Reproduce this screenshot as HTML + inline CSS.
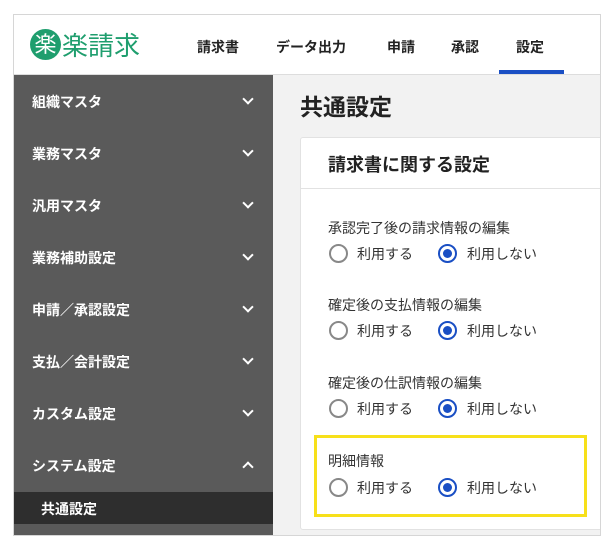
<!DOCTYPE html>
<html><head><meta charset="utf-8"><style>
*{margin:0;padding:0;box-sizing:border-box}
body{width:613px;height:548px;background:#fff;font-family:"Liberation Sans","Noto Sans CJK JP",sans-serif;position:relative;overflow:hidden;color:#222}
.a{position:absolute;white-space:nowrap}
#frame{position:absolute;left:13px;top:14px;width:588px;height:522px;border:1px solid #d6d6d6;background:#f2f2f2;overflow:hidden}
#hdr{position:absolute;left:0;top:0;width:588px;height:60px;background:#fff;border-bottom:1px solid #ddd}
.nav{position:absolute;top:22px;font-size:14px;font-weight:bold;color:#222}
#side{position:absolute;left:0;top:60px;width:259px;height:462px;background:#5a5a5a}
.si{position:absolute;left:18px;font-size:14px;font-weight:bold;color:#fff}
.chev{position:absolute;left:230px;width:8px;height:8px;border-right:2px solid #fff;border-bottom:2px solid #fff;transform:rotate(45deg)}
#card{position:absolute;left:286px;top:122px;width:310px;height:393px;background:#fff;border:1px solid #e2e2e2;border-radius:3px}
.lbl{position:absolute;left:28px;font-size:14px;color:#333}
.r{position:absolute;width:19px;height:19px;border-radius:50%;border:2px solid #888}
.r.on{border:2px solid #1a4fc4}
.r.on::after{content:"";position:absolute;left:3px;top:3px;width:9px;height:9px;border-radius:50%;background:#1a4fc4}
.rt{position:absolute;font-size:14px;color:#333}
</style></head><body>
<div id="frame">
 <div id="hdr">
  <div class="a" style="left:16px;top:14px;width:31px;height:31px;border-radius:50%;background:#1f9e6e;color:#fff;font-size:22px;line-height:31px;text-align:center">楽</div>
  <div class="a" style="left:48px;top:11px;font-size:26px;color:#1f9e6e">楽請求</div>
  <div class="nav" style="left:183px">請求書</div>
  <div class="nav" style="left:262px">データ出力</div>
  <div class="nav" style="left:373px">申請</div>
  <div class="nav" style="left:437px">承認</div>
  <div class="nav" style="left:502px">設定</div>
  <div class="a" style="left:485px;top:55px;width:65px;height:4px;background:#1a4fc4"></div>
 </div>
 <div id="side">
  <div class="si" style="top:17px">組織マスタ</div><div class="chev" style="top:20px"></div>
  <div class="si" style="top:69px">業務マスタ</div><div class="chev" style="top:72px"></div>
  <div class="si" style="top:121px">汎用マスタ</div><div class="chev" style="top:124px"></div>
  <div class="si" style="top:173px">業務補助設定</div><div class="chev" style="top:176px"></div>
  <div class="si" style="top:225px">申請／承認設定</div><div class="chev" style="top:228px"></div>
  <div class="si" style="top:277px">支払／会計設定</div><div class="chev" style="top:280px"></div>
  <div class="si" style="top:329px">カスタム設定</div><div class="chev" style="top:332px"></div>
  <div class="si" style="top:381px">システム設定</div><div class="chev" style="top:388px;transform:rotate(225deg)"></div>
  <div class="a" style="left:0;top:417px;width:259px;height:32px;background:#2e2e2e"></div>
  <div class="si" style="left:27px;top:424px">共通設定</div>
 </div>
 <div class="a" style="left:286px;top:73px;font-size:23px;font-weight:bold;color:#222">共通設定</div>
 <div id="card">
  <div class="a" style="left:0;top:0;width:310px;height:51px;border-bottom:1px solid #e2e2e2"></div>
  <div class="a" style="left:27px;top:13px;font-size:18px;font-weight:bold;color:#222">請求書に関する設定</div>
 </div>
 <div class="lbl a" style="left:314px;top:203px">承認完了後の請求情報の編集</div>
 <div class="r" style="left:315px;top:229px"></div><div class="rt" style="left:343px;top:229px">利用する</div>
 <div class="r on" style="left:424px;top:229px"></div><div class="rt" style="left:453px;top:229px">利用しない</div>
 <div class="lbl a" style="left:314px;top:280px">確定後の支払情報の編集</div>
 <div class="r" style="left:315px;top:306px"></div><div class="rt" style="left:343px;top:306px">利用する</div>
 <div class="r on" style="left:424px;top:306px"></div><div class="rt" style="left:453px;top:306px">利用しない</div>
 <div class="lbl a" style="left:314px;top:358px">確定後の仕訳情報の編集</div>
 <div class="r" style="left:315px;top:384px"></div><div class="rt" style="left:343px;top:384px">利用する</div>
 <div class="r on" style="left:424px;top:384px"></div><div class="rt" style="left:453px;top:384px">利用しない</div>
 <div class="a" style="left:300px;top:420px;width:273px;height:82px;border:3px solid #f7e01a"></div>
 <div class="lbl a" style="left:314px;top:436px">明細情報</div>
 <div class="r" style="left:315px;top:463px"></div><div class="rt" style="left:343px;top:463px">利用する</div>
 <div class="r on" style="left:424px;top:463px"></div><div class="rt" style="left:453px;top:463px">利用しない</div>
</div>
</body></html>
